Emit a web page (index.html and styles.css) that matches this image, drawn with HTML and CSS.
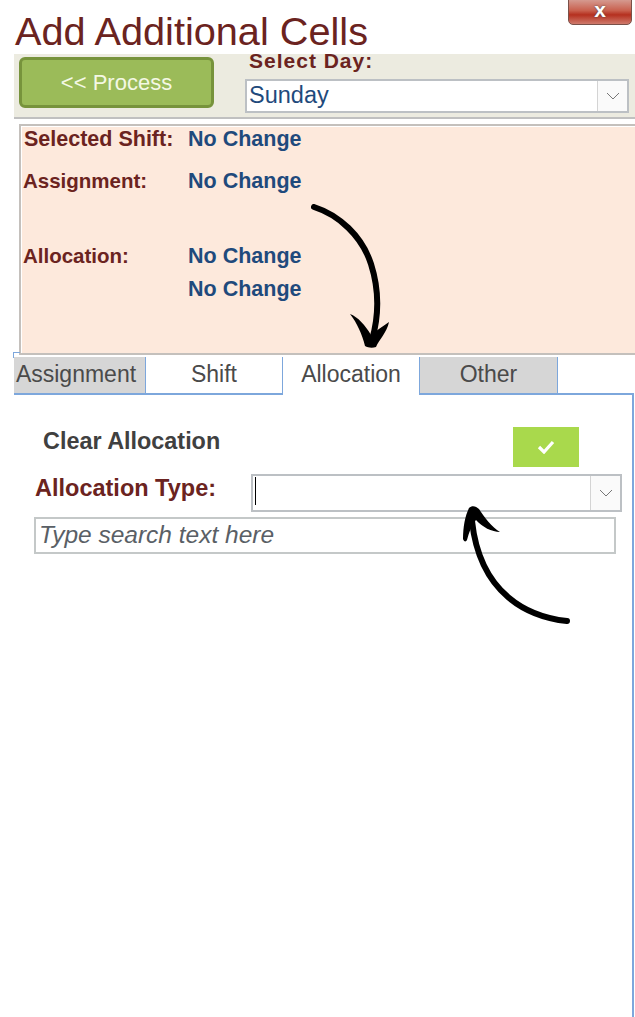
FILE: index.html
```html
<!DOCTYPE html>
<html lang="en">
<head>
    <meta charset="UTF-8">
    <title>Add Additional Cells</title>
    <link rel="stylesheet" href="styles.css">
</head>
<body>
    <div class="close-btn">x</div>

    <h1 class="title">Add Additional Cells</h1>

    <div class="toolbar">
        <button class="process-btn">&lt;&lt; Process</button>
        <div class="day-box">
            <div class="day-label">Select Day:</div>
            <div class="combo day-combo">
                <span class="combo-text">Sunday</span>
                <span class="combo-arrow">
                    <svg width="14" height="8" viewBox="0 0 14 8"><path d="M1 1l6 6 6-6" fill="none" stroke="#777" stroke-width="1"/></svg>
                </span>
            </div>
        </div>
    </div>

    <div class="summary">
        <div class="row row-shift"><span class="row-label">Selected Shift:</span><span class="row-value">No Change</span></div>
        <div class="row row-assign"><span class="row-label">Assignment:</span><span class="row-value">No Change</span></div>
        <div class="row row-alloc"><span class="row-label">Allocation:</span><span class="row-value">No Change</span></div>
        <div class="row row-last"><span class="row-label"></span><span class="row-value">No Change</span></div>
    </div>

    <div class="tab-corner"></div>
    <div class="tabs">
        <div class="tab tab-off tab-first">Assignment</div>
        <div class="tab tab-shift">Shift</div>
        <div class="tab tab-active">Allocation</div>
        <div class="tab tab-off">Other</div>
        <div class="tab-rest"></div>
    </div>

    <div class="tab-body">
        <div class="clear-row">
            <span class="clear-label">Clear Allocation</span>
            <span class="check-btn">
                <svg width="18" height="14" viewBox="0 0 18 14"><path d="M2 7l5 5 9-10" fill="none" stroke="#fff" stroke-width="3.2"/></svg>
            </span>
        </div>
        <div class="type-row">
            <span class="type-label">Allocation Type:</span>
            <div class="combo type-combo">
                <span class="combo-text"><span class="caret"></span></span>
                <span class="combo-arrow">
                    <svg width="14" height="8" viewBox="0 0 14 8"><path d="M1 1l6 6 6-6" fill="none" stroke="#777" stroke-width="1"/></svg>
                </span>
            </div>
        </div>
        <div class="search-box">Type search text here</div>
    </div>

    <!-- hand drawn arrows on top of the screen -->
    <svg class="arrow arrow-down" width="90" height="150" viewBox="0 0 90 150">
        <path d="M3 3C28 11 51 32 60 60C67 82 69 108 61 136" fill="none" stroke="#000" stroke-width="6" stroke-linecap="round"/>
        <path d="M39 110C47 113 54 121 60 131C65 127 72 122 78 118C76 128 68 136 65 143C62 144 57 144 54 142C51 130 46 119 39 110Z" fill="#000"/>
    </svg>
    <svg class="arrow arrow-up" width="115" height="125" viewBox="0 0 115 125">
        <path d="M108 116C70 112 21 90 13 16" fill="none" stroke="#000" stroke-width="6" stroke-linecap="round"/>
        <path d="M4 34C4 22 6 11 10 3C13 0 17 1 20 4C25 12 33 22 41 27C33 27 23 22 17 15C12 21 10 28 8 35C7 37 5 37 4 34Z" fill="#000"/>
    </svg>
</body>
</html>
```

FILE: styles.css
```css
body {
    margin: 0;
    height: 1017px;
    overflow: hidden;
    position: relative;
    background-color: #fff;
    font-family: "Liberation Sans", Arial, sans-serif;
}

.close-btn {
    position: absolute;
    top: -4px;
    left: 568px;
    width: 64px;
    height: 29px;
    border: 1px solid #7a5048;
    border-radius: 0 0 5px 5px;
    background: linear-gradient(#d8aaa2 0%, #c9604e 50%, #b5301f 66%, #cf7a6c 100%);
    color: #fff;
    font-size: 21px;
    font-weight: bold;
    text-align: center;
    line-height: 26px;
    text-shadow: 0 0 2px #444;
    box-sizing: border-box;
}

.title {
    margin: 0;
    height: 54px;
    padding: 8px 0 0 15px;
    box-sizing: border-box;
    font-size: 39.7px;
    font-weight: normal;
    line-height: 46px;
    color: #6b2320;
}

.toolbar {
    display: flex;
    gap: 31px;
    margin-left: 14px;
    height: 65px;
    padding: 3px 6px 0 5px;
    box-sizing: border-box;
    overflow: hidden;
    background-color: #ecebe0;
    border-bottom: 2px solid #c0c0c0;
}

.process-btn {
    width: 195px;
    height: 51px;
    border: 3px solid #77933c;
    border-radius: 6px;
    background-color: #9bbb59;
    color: #f4f8e4;
    font-family: "Liberation Sans", Arial, sans-serif;
    font-size: 22px;
}

.day-box {
    flex: 1;
}

.day-label {
    margin-top: -7px;
    padding-left: 4px;
    height: 29px;
    font-size: 21px;
    font-weight: bold;
    line-height: 22px;
    letter-spacing: 1px;
    color: #6b2320;
}

.combo {
    display: flex;
    box-sizing: border-box;
    background-color: #fff;
    border: 2px solid #bcc0c4;
}

.combo-text {
    flex: 1;
    padding-left: 2px;
    color: #1f4a7c;
}

.combo-arrow {
    display: flex;
    align-items: center;
    justify-content: center;
    width: 29px;
    background-color: #fafafa;
    border-left: 1px solid #d4d4d4;
}

.day-combo {
    height: 34px;
    font-size: 23.5px;
    line-height: 29px;
}

.summary {
    margin: 5px 0 0 19px;
    height: 231px;
    box-sizing: border-box;
    background-color: #fde9dc;
    border: 2px solid #c4c0bc;
    border-right: none;
    box-shadow: inset 1px 1px 0 #fff;
}

.row {
    display: flex;
    font-size: 20.5px;
    font-weight: bold;
    line-height: 24px;
}

.row-shift {
    padding-top: 1px;
}

.row-assign {
    padding-top: 18px;
}

.row-alloc {
    padding-top: 51px;
}

.row-last {
    padding-top: 9px;
}

.row-label {
    width: 167px;
    padding-left: 2px;
    box-sizing: border-box;
    color: #6b2320;
}

.row-shift .row-label {
    padding-left: 3px;
    font-size: 21.5px;
    white-space: nowrap;
}

.row-value {
    font-size: 21.5px;
    color: #1f4a7c;
}

.tab-corner {
    position: absolute;
    left: 13px;
    top: 352px;
    width: 6px;
    height: 5px;
    border-top: 1px solid #7da7dc;
    border-left: 1px solid #7da7dc;
}

.tabs {
    display: flex;
    margin: 2px 0 0 14px;
    height: 38px;
    font-size: 23px;
    color: #4a4a4a;
}

.tab {
    width: 137px;
    box-sizing: border-box;
    text-align: center;
    line-height: 35px;
    border-right: 1px solid #7da7dc;
    border-bottom: 2px solid #7da7dc;
}

.tab-off {
    background-color: #d6d6d6;
    width: 138px;
}

.tab-first {
    width: 132px;
    padding-right: 7px;
    white-space: nowrap;
}

.tab-active {
    border-bottom: none;
}

.tab-rest {
    flex: 1;
    margin-right: 1px;
    border-bottom: 2px solid #7da7dc;
}

.tab-body {
    margin-left: 14px;
    margin-right: 1px;
    height: 640px;
    box-sizing: border-box;
    border-right: 2px solid #7da7dc;
    padding: 32px 0 0 21px;
}

.clear-row {
    display: flex;
    justify-content: space-between;
    padding: 0 53px 0 8px;
    height: 47px;
}

.clear-label {
    font-size: 23.4px;
    font-weight: bold;
    line-height: 28px;
    color: #404040;
}

.check-btn {
    display: flex;
    align-items: center;
    justify-content: center;
    width: 66px;
    height: 40px;
    background-color: #a9d94c;
}

.type-row {
    display: flex;
    height: 43px;
}

.type-label {
    width: 216px;
    font-size: 23.5px;
    font-weight: bold;
    line-height: 28px;
    color: #6b2320;
}

.type-combo {
    width: 371px;
    height: 38px;
}

.caret {
    display: block;
    width: 1px;
    height: 28px;
    margin-top: 1px;
    background-color: #000;
}

.search-box {
    width: 582px;
    height: 37px;
    margin-left: -1px;
    box-sizing: border-box;
    border: 2px solid #c4c8c8;
    padding-left: 3px;
    font-size: 24.5px;
    font-style: italic;
    line-height: 31px;
    color: #5a5f66;
}

.arrow {
    position: absolute;
}

.arrow-down {
    left: 311px;
    top: 204px;
}

.arrow-up {
    left: 459px;
    top: 505px;
}
```
